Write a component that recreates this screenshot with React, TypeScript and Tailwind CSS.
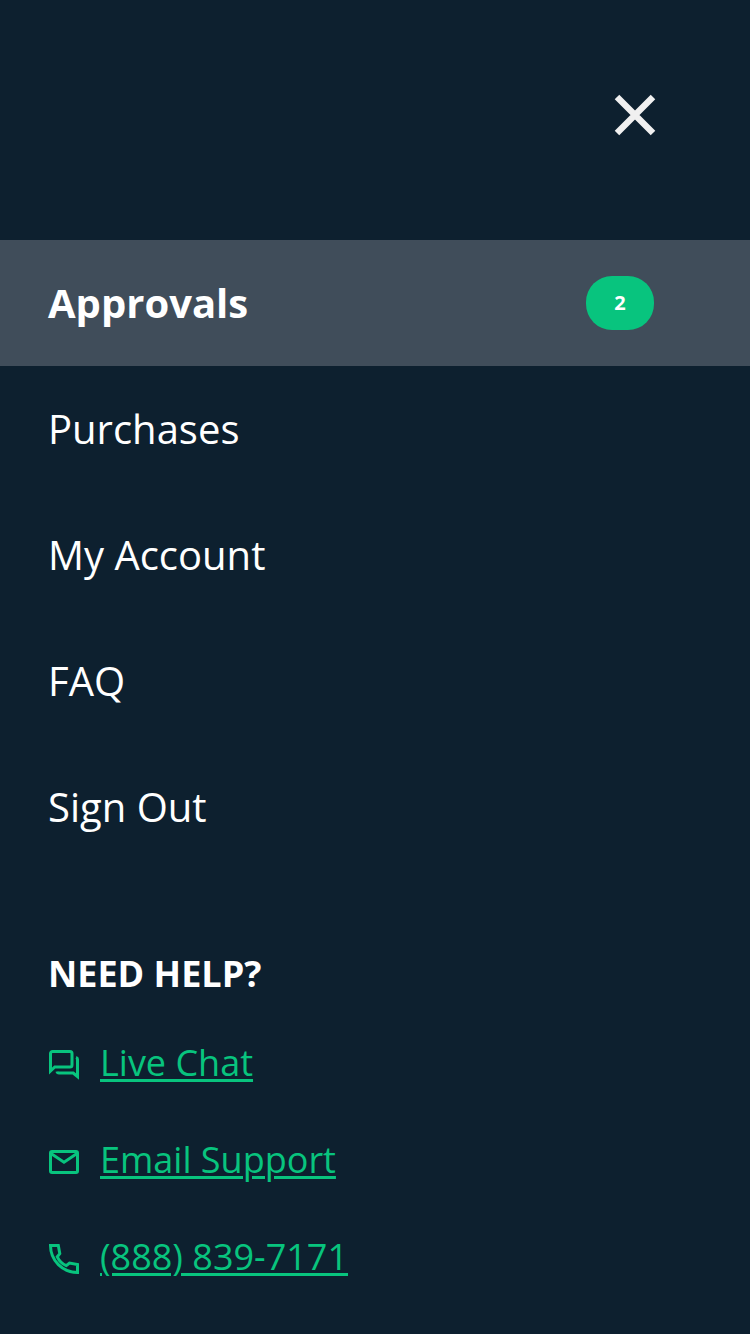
import { useState } from "react"

const NAV_ITEMS = [
    { label: "Approvals", count: 2 },
    { label: "Purchases" },
    { label: "My Account" },
    { label: "FAQ" },
    { label: "Sign Out" },
]

function ChatIcon() {
    return (
        <svg viewBox="0 0 30 30" fill="none" stroke="currentColor" strokeWidth="3" className="w-[30px] h-[30px]">
            <path d="M1.5 21V3.5a2 2 0 0 1 2-2H21a2 2 0 0 1 2 2V15a2 2 0 0 1-2 2H5.8Z" />
            <path d="M27 7.5c1 .3 1.5 .8 1.5 1.8V26.5L24.2 23H10c-1 0-1.8-.5-2-1.5" />
        </svg>
    )
}

function MailIcon() {
    return (
        <svg viewBox="0 0 30 24" fill="none" stroke="currentColor" strokeWidth="3" className="w-[30px] h-[24px]">
            <rect x="1.5" y="1.5" width="27" height="21" rx="1.5" />
            <path d="M2 3.5L15 12.2L28 3.5" />
        </svg>
    )
}

function PhoneIcon() {
    return (
        <svg viewBox="0 0 30 30" fill="none" stroke="currentColor" strokeWidth="3" className="w-[30px] h-[30px]">
            <path d="M1.5 1.5H9.3L10.8 9.7L8.3 12.8C10 16.5 13.5 20 17.3 21.6L20.5 19L28.5 20.5V28.5C13.5 28.5 1.5 16.5 1.5 1.5Z" />
        </svg>
    )
}

const HELP_LINKS = [
    { label: "Live Chat", href: "#chat", icon: <ChatIcon /> },
    { label: "Email Support", href: "#email", icon: <MailIcon /> },
    { label: "(888) 839-7171", href: "tel:8888397171", icon: <PhoneIcon /> },
]

export default function App() {
    const [active, setActive] = useState("Approvals")

    return (
        <div className="w-full h-[1334px] overflow-hidden bg-[#0d202f] text-white font-['Open_Sans',sans-serif]">
            {/* Header */}
            <div className="flex h-60 justify-end pr-[95px] pt-[95px]">
                <button className="w-10 h-10" aria-label="Close menu">
                    <svg viewBox="0 0 40 40" stroke="#f0f0f0" strokeWidth="6.4" className="w-10 h-10 overflow-visible">
                        <path d="M2 2L38 38M38 2L2 38" />
                    </svg>
                </button>
            </div>

            {/* Navigation */}
            <nav>
                {NAV_ITEMS.map((item) => (
                    <button
                        key={item.label}
                        onClick={() => setActive(item.label)}
                        className={`flex w-full h-[126px] items-center justify-between pl-12 pr-24 text-[40px] leading-[54px] ${
                            active === item.label ? "bg-[#404d5a] font-bold" : ""
                        }`}
                    >
                        <span>{item.label}</span>
                        {item.count && (
                            <span className="flex w-[68px] h-[54px] items-center justify-center rounded-[26px] bg-[#08c47e] text-xl font-bold">
                                {item.count}
                            </span>
                        )}
                    </button>
                ))}
            </nav>

            {/* Help */}
            <section className="px-12 pt-[79px] text-4xl">
                <h2 className="h-[50px] leading-[50px] font-bold">NEED HELP?</h2>
                <ul className="mt-10">
                    {HELP_LINKS.map((link) => (
                        <li key={link.label} className="flex h-[97px] items-start text-[#08c47e]">
                            <span className="flex w-8 h-[52px] mr-5 items-center justify-center">{link.icon}</span>
                            <a href={link.href} className="leading-[47px] underline decoration-[3px] underline-offset-[3px]">
                                {link.label}
                            </a>
                        </li>
                    ))}
                </ul>
            </section>
        </div>
    )
}
